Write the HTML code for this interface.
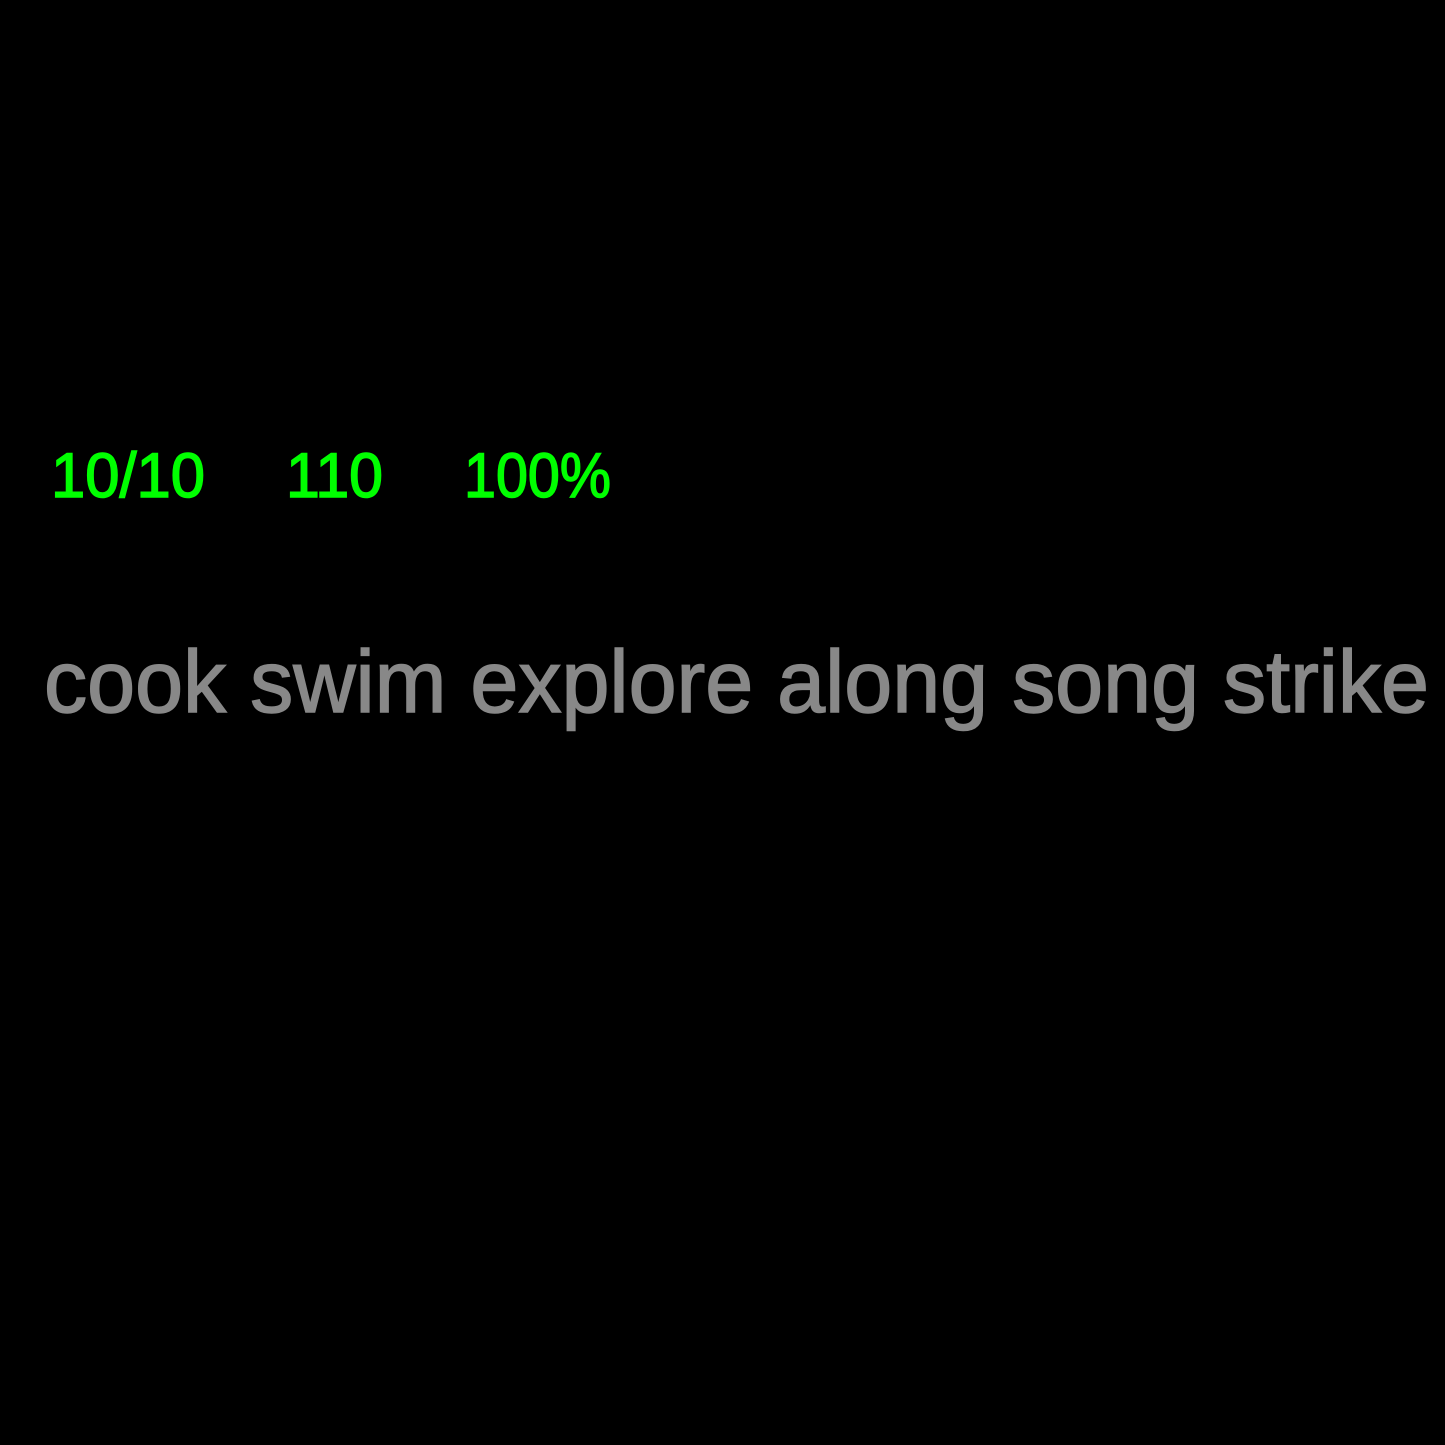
<!DOCTYPE html>
<html><head><meta charset="utf-8"><style>
html,body{margin:0;padding:0;background:#000;width:1445px;height:1445px;overflow:hidden}
svg{display:block}
</style></head><body>
<svg width="1445" height="1445" xmlns="http://www.w3.org/2000/svg">
<rect width="1445" height="1445" fill="#000"/>
<g font-family="Liberation Sans, sans-serif" fill="#00ff00" stroke="#00ff00" stroke-width="1.5" font-size="63">
<text x="51" y="497" textLength="154" lengthAdjust="spacingAndGlyphs">10/10</text>
<text x="286" y="497" textLength="97" lengthAdjust="spacingAndGlyphs">110</text>
<text x="464" y="497" textLength="147" lengthAdjust="spacingAndGlyphs">100%</text>
</g>
<text x="44" y="712" font-family="Liberation Sans, sans-serif" fill="#888888" stroke="#888888" stroke-width="1.5" font-size="88" textLength="1385" lengthAdjust="spacingAndGlyphs">cook swim explore along song strike</text>
</svg>
</body></html>
